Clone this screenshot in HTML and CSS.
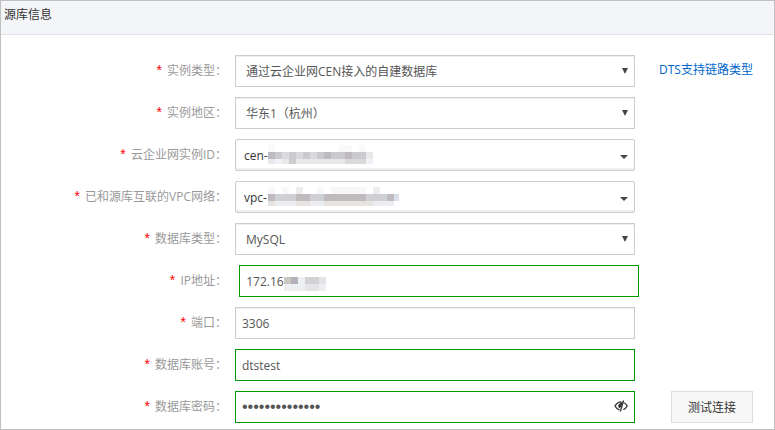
FILE: index.html
```html
<!DOCTYPE html>
<html lang="zh-CN">
<head>
    <meta charset="UTF-8">
    <meta name="viewport" content="width=device-width, initial-scale=1.0">
    <title>源库信息</title>
    <link rel="stylesheet" href="styles.css">
</head>
<body>

    <form class="panel">
        <h2 class="panel-header">源库信息</h2>

        <div class="panel-body">
            <div class="row">
                <label class="label" for="instanceType"><span class="required">*</span> 实例类型：</label>
                <div class="field select">
                    <select class="control" id="instanceType">
                        <option>通过云企业网CEN接入的自建数据库</option>
                    </select>
                </div>
                <a class="link" href="#">DTS支持链路类型</a>
            </div>

            <div class="row">
                <label class="label" for="region"><span class="required">*</span> 实例地区：</label>
                <div class="field select">
                    <select class="control" id="region">
                        <option>华东1（杭州）</option>
                    </select>
                </div>
            </div>

            <div class="row">
                <label class="label" for="cenId"><span class="required">*</span> 云企业网实例ID：</label>
                <div class="field combo">
                    <select class="control" id="cenId">
                        <option>cen-</option>
                    </select>
                    <svg class="mask" width="105" height="19" shape-rendering="crispEdges">
                        <path fill="#f9f9fa" d="M0 0h7v7H0zM70 0h14v7H70zM91 0h7v7h-7z"/>
                        <path fill="#bdbac0" d="M0 7h7v7H0zM56 7h7v7h-7zM77 7h7v7h-7z"/>
                        <path fill="#cbcbcd" d="M7 7h7v7H7zM21 7h7v7h-7zM35 7h7v7h-7zM49 7h7v7h-7zM63 7h14v7H63zM84 7h14v7H84z"/>
                        <path fill="#dbd9dc" d="M14 7h7v7h-7zM28 7h7v7h-7zM42 7h7v7h-7zM77 14h21v5H77z"/>
                        <path fill="#cdcdcd" d="M21 14h7v5h-7z"/>
                        <path fill="#e8e7e9" d="M98 7h7v7h-7zM0 14h7v5H0zM14 14h7v5h-7zM28 14h49v5H28z"/>
                        <path fill="#f0f1f6" d="M7 14h7v5H7zM98 14h7v5h-7z"/>
                    </svg>
                </div>
            </div>

            <div class="row">
                <label class="label" for="vpcId"><span class="required">*</span> 已和源库互联的VPC网络：</label>
                <div class="field combo">
                    <select class="control" id="vpcId">
                        <option>vpc-</option>
                    </select>
                    <svg class="mask" width="131" height="19" shape-rendering="crispEdges">
                        <path fill="#f7f7f8" d="M0 0h7v7H0zM14 0h7v7h-7zM49 0h7v7h-7zM63 0h35v7H63z"/>
                        <path fill="#ededee" d="M28 0h7v7h-7zM105 0h7v7h-7z"/>
                        <path fill="#bebabd" d="M0 7h7v7H0zM28 7h14v7H28zM56 7h42v7H56zM119 7h7v7h-7z"/>
                        <path fill="#cfd0d4" d="M7 7h21v7H7zM42 7h14v7H42zM98 7h21v7H98z"/>
                        <path fill="#dcdfec" d="M126 7h5v7h-5z"/>
                        <path fill="#e6e3e0" d="M0 14h7v5H0zM28 14h14v5H28zM56 14h49v5H56z"/>
                        <path fill="#ecedf0" d="M7 14h21v5H7zM42 14h14v5H42zM105 14h21v5h-21z"/>
                    </svg>
                </div>
            </div>

            <div class="row">
                <label class="label" for="dbType"><span class="required">*</span> 数据库类型：</label>
                <div class="field select">
                    <select class="control" id="dbType">
                        <option>MySQL</option>
                    </select>
                </div>
            </div>

            <div class="row">
                <label class="label" for="ip"><span class="required">*</span> IP地址：</label>
                <div class="field ip">
                    &nbsp;<input class="control valid" type="text" id="ip" value="172.16.">
                    <svg class="mask" width="42" height="14" shape-rendering="crispEdges">
                        <path fill="#cbc7c2" d="M0 0h7v7H0z"/>
                        <path fill="#b3b2b9" d="M7 0h7v7H7z"/>
                        <path fill="#edf0f3" d="M14 0h7v7h-7zM0 7h21v7H0zM35 7h7v7h-7z"/>
                        <path fill="#d2d2d4" d="M21 0h14v7H21z"/>
                        <path fill="#e5e5e8" d="M35 0h7v7h-7zM21 7h14v7H21z"/>
                    </svg>
                </div>
            </div>

            <div class="row">
                <label class="label" for="port"><span class="required">*</span> 端口：</label>
                <div class="field">
                    <input class="control" type="text" id="port" value="3306">
                </div>
            </div>

            <div class="row">
                <label class="label" for="account"><span class="required">*</span> 数据库账号：</label>
                <div class="field">
                    <input class="control valid" type="text" id="account" value="dtstest">
                </div>
            </div>

            <div class="row">
                <label class="label" for="password"><span class="required">*</span> 数据库密码：</label>
                <div class="field">
                    <input class="control valid password" type="password" id="password" value="dtstest1234567">
                    <button class="toggle" type="button" aria-label="显示密码">
                        <svg width="14" height="12" viewBox="0 0 14 12" fill="none" stroke="#333">
                            <path d="M7.500 1.800C4.500 1.800 2.300 3.500 1 6c1 2 2.500 3.300 4.500 3.900" stroke-width="1.300"/>
                            <path d="M6.500 3.200L4.500 5.500l1 2.500L9 2.600z" fill="#333"/>
                            <path d="M9.600.5L6.300 11.500" stroke-width="1.300"/>
                            <path d="M10.200 2.800C11.500 3.500 12.500 4.600 13.200 6c-1 1.800-2.200 3-3.900 3.700" stroke-width="1.300"/>
                        </svg>
                    </button>
                </div>
                <button class="test-btn" type="button">测试连接</button>
            </div>
        </div>
    </form>

</body>
</html>
```
FILE: styles.css
```css
* {
    box-sizing: border-box;
    margin: 0;
    padding: 0;
}

body {
    font-family: "Open Sans", "Noto Sans CJK SC", sans-serif;
    font-size: 12px;
    color: #333;
    background-color: #fff;
}

.panel {
    border: 1px solid #c0c0c0;
}

.panel-header {
    height: 34px;
    padding: 0 3px;
    border-bottom: 1px solid #dfe4e8;
    background-color: #f4f5f9;
    font-size: 12px;
    font-weight: normal;
    line-height: 28px;
}

.panel-body {
    display: flex;
    flex-direction: column;
    gap: 10px;
    padding: 20px 0 6px;
}

.row {
    display: grid;
    grid-template-columns: 226px minmax(0, 1fr) 139px;
    height: 32px;
}

.label {
    color: #999;
    line-height: 30px;
    text-align: right;
    white-space: nowrap;
}

.required {
    margin-right: 2px;
    color: #f00;
    font-family: "Liberation Sans", sans-serif;
    font-size: 14px;
}

/* Fields */
.field {
    position: relative;
    margin-left: 8px;
    white-space: nowrap;
}

.control {
    width: 100%;
    height: 32px;
    padding: 0 6px;
    border: 1px solid #ccc;
    border-radius: 0;
    background-color: #fff;
    color: #555;
    font-family: inherit;
    font-size: 12px;
    vertical-align: top;
    appearance: none;
    outline: none;
    box-shadow: inset 0 1px 1px #eee;
}

.valid {
    border-color: #090;
    box-shadow: none;
}

.password {
    font-family: "Liberation Sans", sans-serif;
    font-size: 16px;
}

.select .control {
    padding: 0 10px;
}

.combo .control {
    padding: 0 8px;
    border-radius: 2px;
    color: #333;
    box-shadow: inset 0 -2px 1px #eee;
}

.ip {
    font-size: 16px;
}

/* Arrows */
.select::after,
.combo::after {
    content: "";
    position: absolute;
    background-color: #444;
    clip-path: polygon(0 0, 100% 0, 50% 100%);
    pointer-events: none;
}

.select::after {
    top: 13px;
    right: 7px;
    width: 6px;
    height: 6px;
}

.combo::after {
    top: 16px;
    right: 7px;
    width: 8px;
    height: 4px;
}

/* Hidden part of a value */
.mask {
    position: absolute;
    top: 6px;
    left: 33px;
    pointer-events: none;
}

.ip .mask {
    top: 12px;
    left: 49px;
}

.toggle {
    position: absolute;
    top: 9px;
    right: 7px;
    width: 14px;
    height: 12px;
    border: none;
    background: none;
    cursor: pointer;
}

.toggle svg {
    display: block;
}

.link {
    padding-left: 24px;
    color: #06c;
    line-height: 30px;
    text-decoration: none;
}

.test-btn {
    justify-self: start;
    height: 32px;
    margin-left: 36px;
    padding: 0 16px;
    border: 1px solid #ddd;
    background-color: #f7f7f7;
    color: #333;
    font-family: inherit;
    font-size: 12px;
    cursor: pointer;
}
```
